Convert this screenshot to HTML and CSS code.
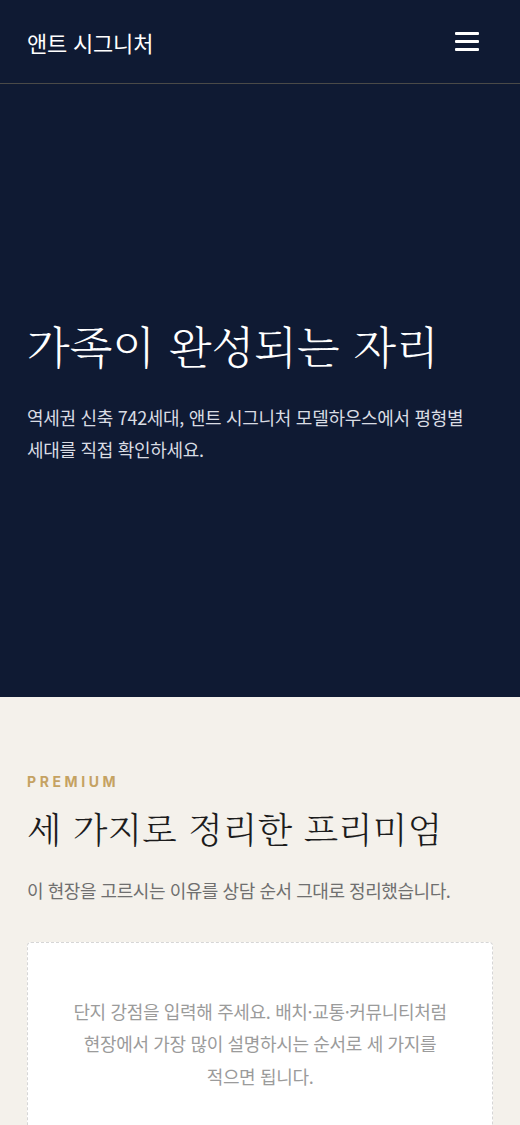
FILE: index.html
```html
<!DOCTYPE html>
<html lang="ko">
<head>
<meta charset="utf-8">
<link rel="stylesheet" href="styles.css">
</head>
<body>
<header class="topbar">
  <div class="logo">앤트 시그니처</div>
  <button class="menu" aria-label="메뉴">
    <span></span><span></span><span></span>
  </button>
</header>
<section class="hero">
  <div class="hero-inner">
    <h1 class="hero-title">가족이 완성되는 자리</h1>
    <p class="hero-text">역세권 신축 742세대, 앤트 시그니처 모델하우스에서 평형별 세대를 직접 확인하세요.</p>
  </div>
</section>
<section class="premium">
  <div class="eyebrow">PREMIUM</div>
  <h2 class="section-title">세 가지로 정리한 프리미엄</h2>
  <p class="section-sub">이 현장을 고르시는 이유를 상담 순서 그대로 정리했습니다.</p>
  <div class="placeholder">
    <p>단지 강점을 입력해 주세요. 배치·교통·커뮤니티처럼 현장에서 가장 많이 설명하시는 순서로 세 가지를 적으면 됩니다.</p>
  </div>
</section>
</body>
</html>
```
FILE: styles.css
```css
* { box-sizing: border-box; }
html, body { margin: 0; padding: 0; }
body {
  font-family: "Noto Sans CJK KR", "Noto Sans", sans-serif;
  background: #f4f1eb;
  color: #1a1a1a;
  word-break: keep-all;
}
.topbar {
  height: 84px;
  background: #0f1a33;
  border-bottom: 1px solid #4a4a48;
  display: flex;
  align-items: center;
  justify-content: space-between;
  padding: 0 41px 0 27px;
}
.logo {
  color: #ffffff;
  font-size: 22px;
  font-weight: 400;
  letter-spacing: -0.2px;
}
.menu {
  background: none;
  border: 0;
  padding: 0;
  width: 24px;
  display: flex;
  flex-direction: column;
  gap: 5.5px;
  cursor: pointer;
}
.menu span {
  display: block;
  height: 2.5px;
  background: #ffffff;
  border-radius: 1px;
}
.hero {
  background: #0f1a33;
  height: 613px;
  display: flex;
  align-items: center;
  padding: 0 27px;
}
.hero-inner { width: 100%; }
.hero-title {
  margin: 0 0 25px;
  color: #ffffff;
  font-family: "Noto Serif CJK KR", "Noto Serif KR", "Noto Sans CJK KR", serif;
  font-size: 44px;
  font-weight: 300;
  line-height: 1.35;
  letter-spacing: 0.2px;
}
.hero-text {
  margin: 0;
  color: #d9dce3;
  font-size: 18px;
  line-height: 32px;
  letter-spacing: -0.3px;
}
.premium {
  padding: 76px 27px 40px;
}
.eyebrow {
  color: #c5a262;
  font-family: "Inter", "Noto Sans", sans-serif;
  font-size: 14px;
  font-weight: 700;
  letter-spacing: 3.6px;
  line-height: 18px;
}
.section-title {
  margin: 13px 0 23px;
  font-family: "Noto Serif CJK KR", "Noto Serif KR", "Noto Sans CJK KR", serif;
  font-size: 35.6px;
  font-weight: 300;
  line-height: 1.37;
  color: #1c1c1c;
  letter-spacing: 0.3px;
}
.section-sub {
  margin: 0 0 38px;
  font-size: 18px;
  line-height: 28px;
  color: #6f6f6f;
  letter-spacing: -0.45px;
}
.placeholder {
  background: #ffffff;
  border: 1.5px dashed #d6d6d6;
  border-radius: 4px;
  padding: 52px 30px;
  min-height: 220px;
  text-align: center;
}
.placeholder p {
  margin: 0;
  font-size: 18px;
  line-height: 32.5px;
  color: #9b9b9b;
  letter-spacing: -0.35px;
}
```
